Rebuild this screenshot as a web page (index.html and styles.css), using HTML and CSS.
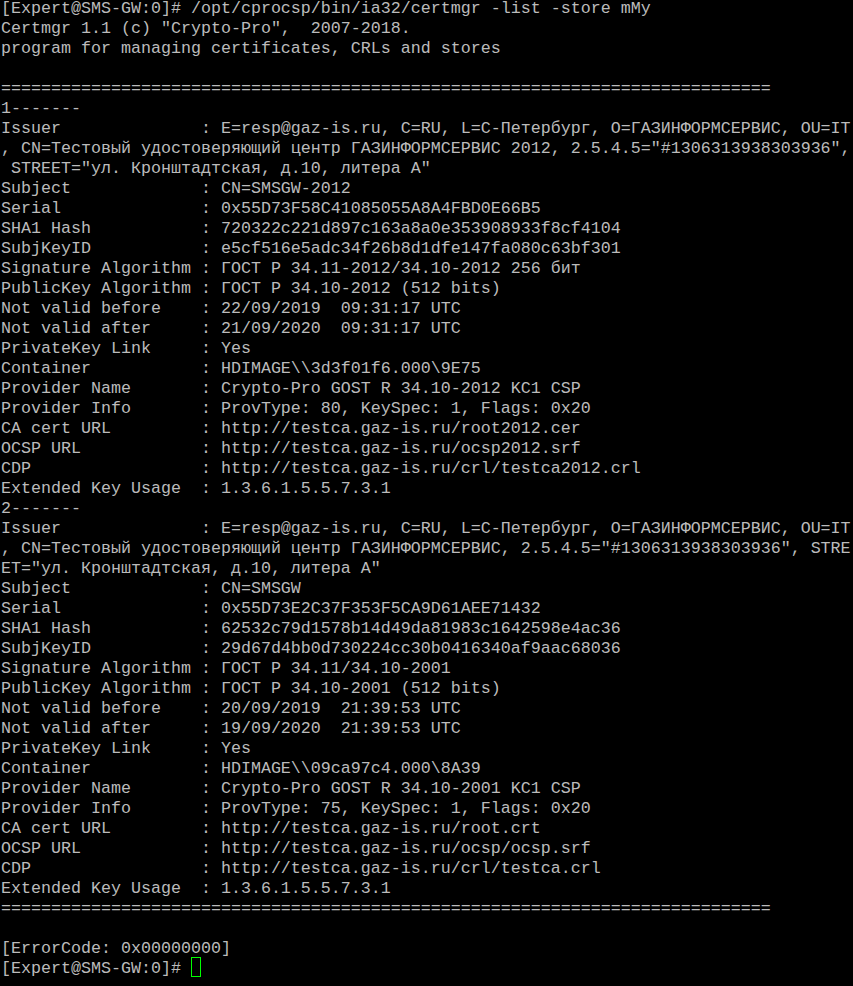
FILE: index.html
```html
<!DOCTYPE html>
<html lang="ru">
<head>
<meta charset="utf-8">
<title>certmgr</title>
<link rel="stylesheet" href="styles.css">
</head>
<body>
<pre class="term">[Expert@SMS-GW:0]# /opt/cprocsp/bin/ia32/certmgr -list -store mMy
Certmgr 1.1 (c) "Crypto-Pro",  2007-2018.
program for managing certificates, CRLs and stores

=============================================================================
1-------
Issuer              : E=resp@gaz-is.ru, C=RU, L=С-Петербург, О=ГАЗИНФОРМСЕРВИС, OU=IT
, CN=Тестовый удостоверяющий центр ГАЗИНФОРМСЕРВИС 2012, 2.5.4.5="#1306313938303936",
 STREET="ул. Кронштадтская, д.10, литера А"
Subject             : CN=SMSGW-2012
Serial              : 0x55D73F58C41085055A8A4FBD0E66B5
SHA1 Hash           : 720322c221d897c163a8a0e353908933f8cf4104
SubjKeyID           : e5cf516e5adc34f26b8d1dfe147fa080c63bf301
Signature Algorithm : ГОСТ Р 34.11-2012/34.10-2012 256 бит
PublicKey Algorithm : ГОСТ Р 34.10-2012 (512 bits)
Not valid before    : 22/09/2019  09:31:17 UTC
Not valid after     : 21/09/2020  09:31:17 UTC
PrivateKey Link     : Yes
Container           : HDIMAGE\\3d3f01f6.000\9E75
Provider Name       : Crypto-Pro GOST R 34.10-2012 KC1 CSP
Provider Info       : ProvType: 80, KeySpec: 1, Flags: 0x20
CA cert URL         : http://testca.gaz-is.ru/root2012.cer
OCSP URL            : http://testca.gaz-is.ru/ocsp2012.srf
CDP                 : http://testca.gaz-is.ru/crl/testca2012.crl
Extended Key Usage  : 1.3.6.1.5.5.7.3.1
2-------
Issuer              : E=resp@gaz-is.ru, C=RU, L=С-Петербург, О=ГАЗИНФОРМСЕРВИС, OU=IT
, CN=Тестовый удостоверяющий центр ГАЗИНФОРМСЕРВИС, 2.5.4.5="#1306313938303936", STRE
ET="ул. Кронштадтская, д.10, литера А"
Subject             : CN=SMSGW
Serial              : 0x55D73E2C37F353F5CA9D61AEE71432
SHA1 Hash           : 62532c79d1578b14d49da81983c1642598e4ac36
SubjKeyID           : 29d67d4bb0d730224cc30b0416340af9aac68036
Signature Algorithm : ГОСТ Р 34.11/34.10-2001
PublicKey Algorithm : ГОСТ Р 34.10-2001 (512 bits)
Not valid before    : 20/09/2019  21:39:53 UTC
Not valid after     : 19/09/2020  21:39:53 UTC
PrivateKey Link     : Yes
Container           : HDIMAGE\\09ca97c4.000\8A39
Provider Name       : Crypto-Pro GOST R 34.10-2001 KC1 CSP
Provider Info       : ProvType: 75, KeySpec: 1, Flags: 0x20
CA cert URL         : http://testca.gaz-is.ru/root.crt
OCSP URL            : http://testca.gaz-is.ru/ocsp/ocsp.srf
CDP                 : http://testca.gaz-is.ru/crl/testca.crl
Extended Key Usage  : 1.3.6.1.5.5.7.3.1
=============================================================================

[ErrorCode: 0x00000000]
[Expert@SMS-GW:0]# <span class="cursor"></span></pre>
</body>
</html>
```

FILE: styles.css
```css
html, body {
  margin: 0;
  padding: 0;
  background: #000;
  height: 100%;
  overflow: hidden;
}

.term {
  margin: -1px 0 0 0;
  padding: 0 0 0 1px;
  font-family: "Liberation Mono", "Courier New", monospace;
  font-size: 16.6667px;
  line-height: 20px;
  color: #bbbbbb;
  white-space: pre;
}

.cursor {
  display: inline-block;
  width: 10px;
  height: 20px;
  box-sizing: border-box;
  border: 1px solid #00ff00;
  vertical-align: top;
  position: relative;
  top: -2px;
}
```
